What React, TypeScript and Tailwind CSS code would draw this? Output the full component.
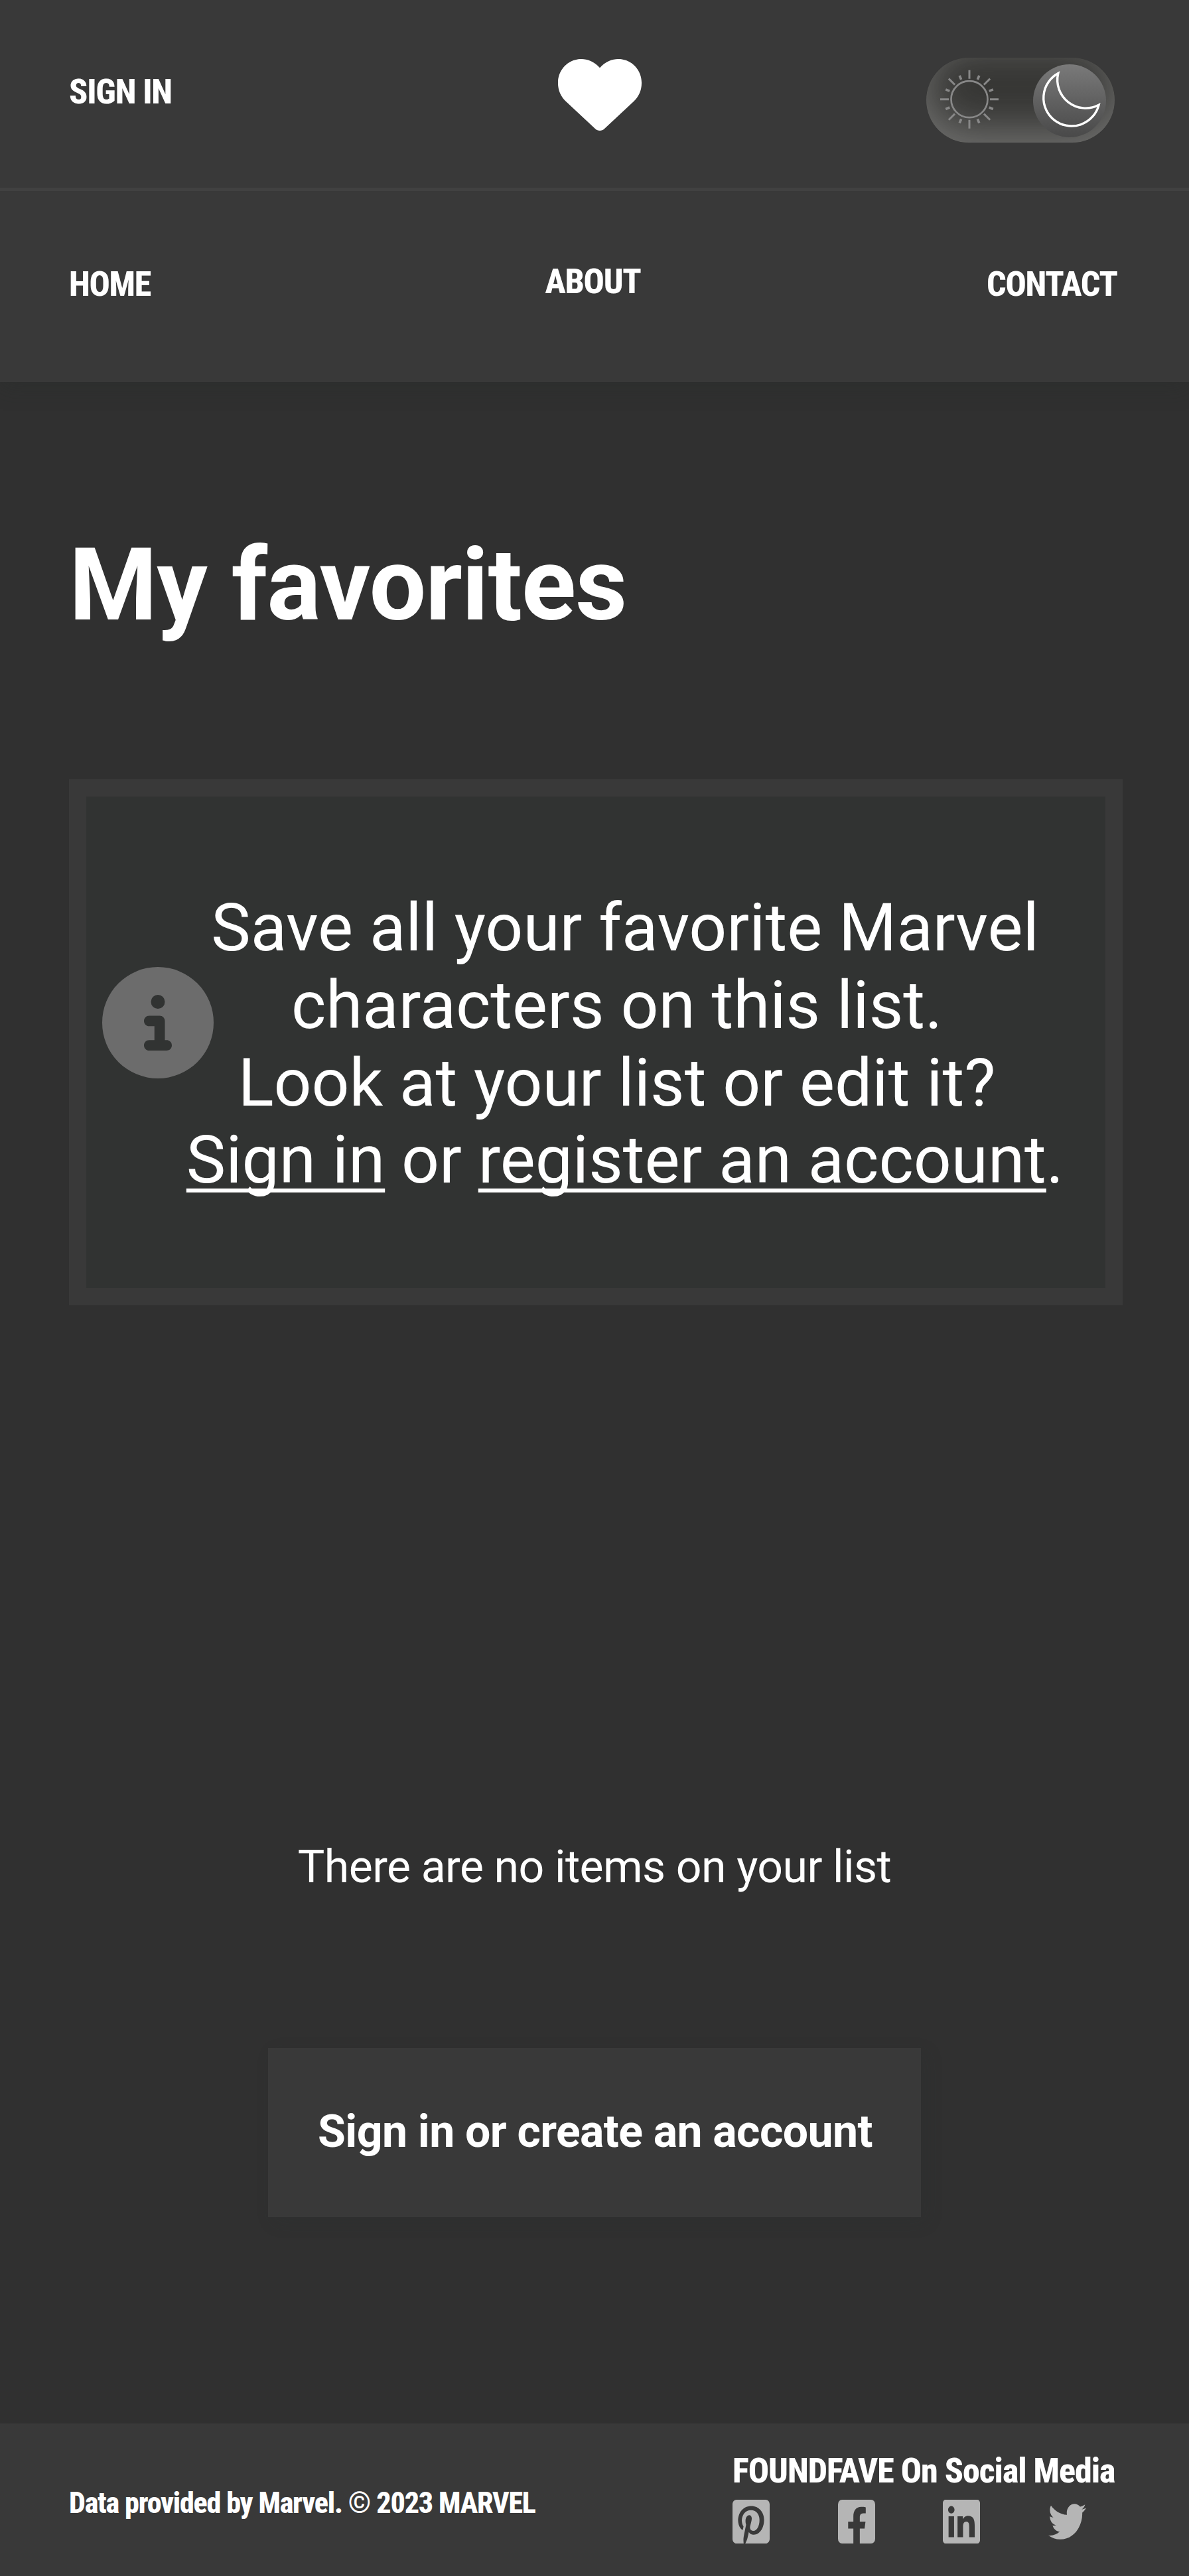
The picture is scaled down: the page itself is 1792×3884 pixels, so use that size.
import { FaPinterestSquare, FaFacebookSquare, FaLinkedin, FaTwitter } from "react-icons/fa";
import { FaCircleInfo } from "react-icons/fa6";

const CONDENSED = "font-['Roboto_Condensed','Roboto'] [font-stretch:75%] font-[850] whitespace-nowrap";

const LINK = "underline [text-decoration-skip-ink:none] decoration-[6px] underline-offset-[9px]";

const RAYS = Array.from({ length: 16 }, (_, i) => i);

function ThemeToggle() {
  return (
    <button className="relative h-[128px] w-[284px] overflow-hidden rounded-full bg-[#383836] shadow-[inset_0_-20px_60px_rgba(255,255,255,0.28),inset_0_20px_60px_rgba(56,56,54,0.5)]">
      <span className="absolute left-[161px] top-[10px] size-[110px] rounded-full bg-linear-to-b from-[#7a7a7a] to-[#494949]" />
      <svg className="absolute inset-0" width="284" height="128" viewBox="0 0 284 128" fill="none">
        <g stroke="#888888" strokeWidth="2.7">
          <circle cx="65" cy="62.7" r="27.5" />
          {RAYS.map((i) => (
            <line
              key={i}
              x1="65"
              x2="65"
              y1={i % 2 ? 30.5 : 31.7}
              y2={i % 2 ? 24 : 18.7}
              strokeWidth={i % 2 ? 3.6 : 3}
              transform={`rotate(${i * 22.5} 65 62.7)`}
            />
          ))}
        </g>
        <path d="M198.8 23.6A42.3 42.3 0 1 0 260 71.3A42.7 42.7 0 0 1 198.8 23.6Z" stroke="#fff" strokeWidth="3.4" />
      </svg>
    </button>
  );
}

function Header() {
  return (
    <header className="h-[576px] bg-[#393939] shadow-[0_8px_32px_rgba(38,42,40,0.3)]">
      <div className="flex h-[288px] justify-between border-b-[5px] border-[#414141] pl-[104px] pr-[112px]">
        <a className={`${CONDENSED} mt-[108px] w-[445px] text-[52px] leading-[61px] tracking-[-1.15px]`}>SIGN IN</a>
        <svg className="mt-[89px] h-[108px] w-[126px]" viewBox="0 42 512 438" preserveAspectRatio="none" fill="#fff">
          <path d="M47.6 300.4L228.3 469.1c7.5 7 17.4 10.9 27.7 10.9s20.2-3.9 27.7-10.9L464.4 300.4c30.4-28.3 47.6-68 47.6-109.5v-5.8c0-69.9-50.5-129.5-119.4-141C347 36.5 300.6 51.4 268 84L256 96 244 84c-32.6-32.6-79-47.5-124.6-39.9C50.5 55.6 0 115.2 0 185.1v5.8c0 41.5 17.2 81.2 47.6 109.5z" />
        </svg>
        <div className="mt-[87px] flex w-[421px] justify-end">
          <ThemeToggle />
        </div>
      </div>
      <nav className="flex justify-between pl-[104px] pr-[109px] pt-[110px] text-[52px] leading-[61px] tracking-[-1.3px]">
        <a className={`${CONDENSED} w-[196px]`}>HOME</a>
        <a className={`${CONDENSED} -mt-1`}>ABOUT</a>
        <a className={`${CONDENSED} w-[196px] text-right`}>CONTACT</a>
      </nav>
    </header>
  );
}

const SQUARE_ICONS = [FaPinterestSquare, FaFacebookSquare, FaLinkedin];

function Footer() {
  return (
    <footer className="flex h-[230px] justify-between bg-[#393939] pl-[104px] pr-[110px]">
      <p className={`${CONDENSED} mt-[94px] text-[44px] leading-[52px] tracking-[-1.15px]`}>
        Data provided by Marvel. © 2023 MARVEL
      </p>
      <div className="w-[578px] pt-[41px]">
        <p className={`${CONDENSED} text-[52px] leading-[61px] tracking-[-1.02px]`}>FOUNDFAVE On Social Media</p>
        <div className="mt-[13px] flex gap-[102.5px] text-[#b5b5b5]">
          {SQUARE_ICONS.map((Icon, i) => (
            <Icon key={i} viewBox="0 32 448 448" preserveAspectRatio="none" className="h-[66px] w-[56px]" />
          ))}
          <FaTwitter viewBox="0 0 512 512" preserveAspectRatio="none" className="h-[66px] w-[57px]" />
        </div>
      </div>
    </footer>
  );
}

export default function App() {
  return (
    <div className="flex h-[3884px] w-[1792px] flex-col bg-[#303030] font-['Roboto',sans-serif] text-white">
      <Header />
      <main className="flex flex-1 flex-col items-center px-[104px]">
        <h1 className="mt-[217px] self-start text-[152px] leading-[178px] font-bold tracking-[-0.9px] whitespace-nowrap">
          My favorites
        </h1>
        <section className="mt-[204px] flex h-[793px] w-[1588px] self-start border-[26px] border-[#393939] bg-[#313332]">
          <FaCircleInfo className="ml-[24px] mt-[257px] size-[168px] shrink-0 text-[#6c6c6c]" />
          <p className="-ml-[80px] w-[1400px] pt-[140px] text-center text-[100px] leading-[116.8px] whitespace-nowrap">
            Save all your favorite Marvel
            <br />
            characters on this list.&nbsp;
            <br />
            Look at your list or edit it?&nbsp;
            <br />
            <a className={LINK}>Sign in</a> or <a className={LINK}>register an account</a>.
          </p>
        </section>
        <p className="mt-[807px] text-[68px] leading-[80px] tracking-[-0.6px] whitespace-nowrap">
          There are no items on your list
        </p>
        <button className="mt-[233px] h-[255px] w-[984px] bg-[#393939] pb-[3px] pl-[2px] text-[68px] leading-[80px] font-bold tracking-[-0.6px] whitespace-nowrap shadow-[8px_8px_24px_rgba(40,46,44,0.15)]">
          Sign in or create an account
        </button>
      </main>
      <Footer />
    </div>
  );
}
